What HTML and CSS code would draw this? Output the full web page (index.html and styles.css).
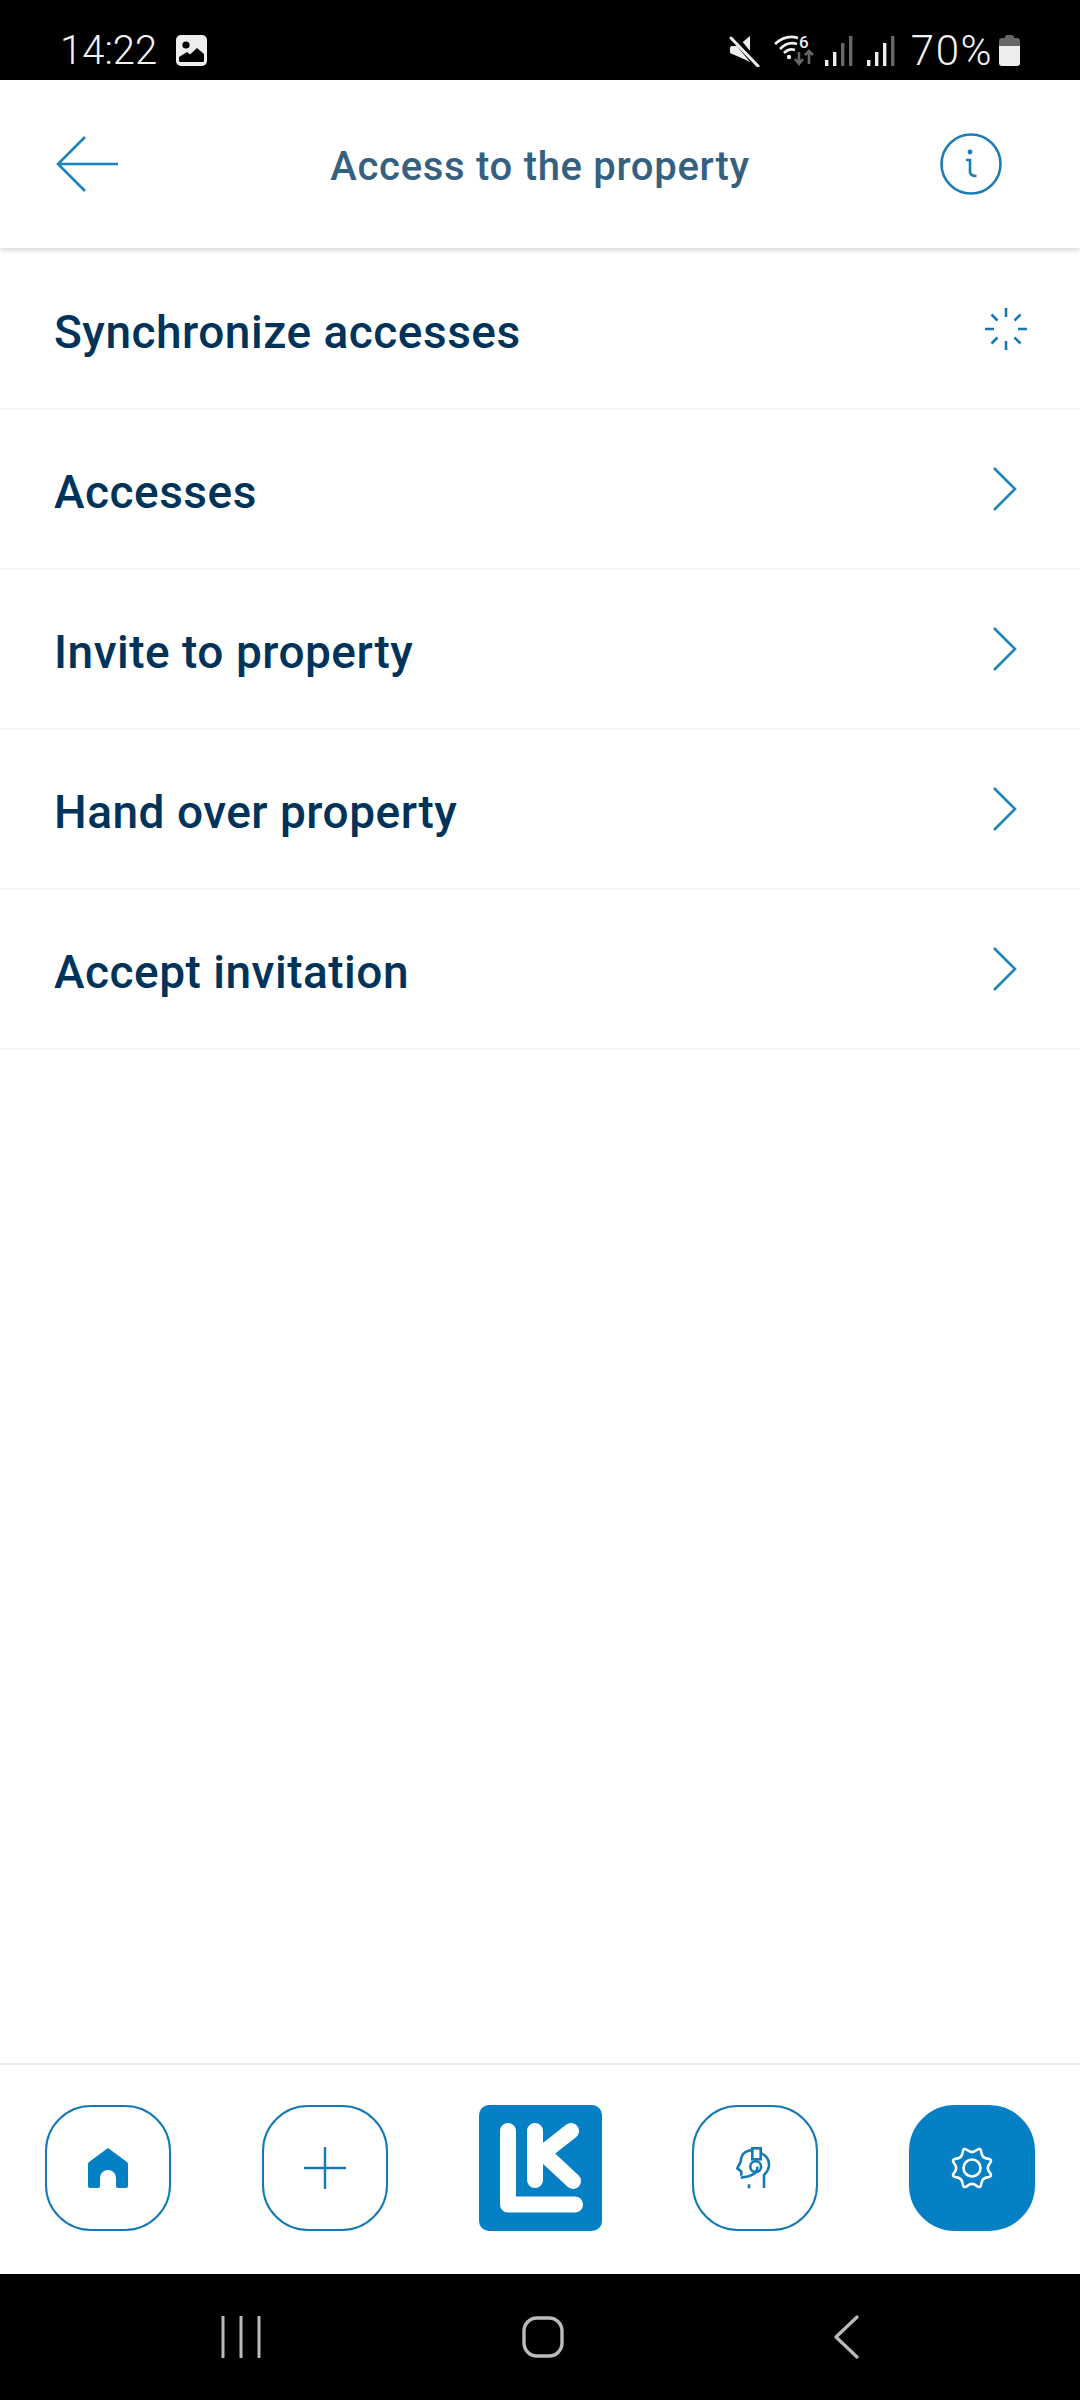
FILE: index.html
```html
<!DOCTYPE html>
<html lang="en">
<head>
  <meta charset="UTF-8">
  <meta name="viewport" content="width=device-width, initial-scale=1.0">
  <title>Access to the property</title>
  <link rel="stylesheet" href="styles.css">
</head>
<body>

  <div class="status-bar">
    <div class="status-left">
      <span class="clock">14:22</span>
      <svg class="icon-picture" viewBox="0 0 31 31">
        <rect width="31" height="31" rx="5" fill="#eee"/>
        <circle cx="10" cy="10" r="3.6" fill="#000"/>
        <path d="M3 26 V22 L11 17 L14 19.5 L21 13 L28 19 V26 Q28 27 26 27 H5 Q3 27 3 26Z" fill="#000"/>
      </svg>
    </div>
    <div class="status-right">
      <svg class="icon-mute" viewBox="0 0 32 32">
        <path d="M1 13 Q1 11 3 11 H9 L21 1 V27 L17 25 L1 18Z" fill="#eee"/>
        <path d="M4 1 L29 31" stroke="#000" stroke-width="7"/>
        <path d="M2 3 L29 31" stroke="#eee" stroke-width="3" stroke-linecap="round"/>
      </svg>
      <svg class="icon-wifi" viewBox="0 -8 42 40">
        <path d="M1 9 Q12 -1 24 3" fill="none" stroke="#eee" stroke-width="2.6"/>
        <path d="M6 14 Q14 6 23 9" fill="none" stroke="#eee" stroke-width="2.6"/>
        <path d="M10 18 Q15 13 21 15" fill="none" stroke="#eee" stroke-width="2.6"/>
        <circle cx="15" cy="22" r="2.2" fill="#eee"/>
        <text x="25" y="13" class="wifi-six">6</text>
        <path d="M25 29 V17 M21 24 L25 29 L29 24" fill="none" stroke="#666" stroke-width="2.6"/>
        <path d="M35 29 V16 M31 20 L35 16 L39 20" fill="none" stroke="#666" stroke-width="2.6"/>
      </svg>
      <svg class="icon-signal" viewBox="0 0 30 32">
        <rect x="1" y="25" width="3.4" height="6" fill="#eee"/>
        <rect x="9" y="17" width="3.4" height="14" fill="#eee"/>
        <rect x="17" y="8" width="3.4" height="23" fill="#666"/>
        <rect x="25" y="1" width="3.4" height="30" fill="#666"/>
      </svg>
      <svg class="icon-signal" viewBox="0 0 30 32">
        <rect x="1" y="25" width="3.4" height="6" fill="#eee"/>
        <rect x="9" y="17" width="3.4" height="14" fill="#eee"/>
        <rect x="17" y="8" width="3.4" height="23" fill="#eee"/>
        <rect x="25" y="1" width="3.4" height="30" fill="#666"/>
      </svg>
      <span class="battery-text">70%</span>
      <svg class="icon-battery" viewBox="0 0 21 31">
        <path d="M6 3 Q6 0 8 0 H13 Q15 0 15 3 H18 Q21 3 21 6 V11 H0 V6 Q0 3 3 3Z" fill="#666"/>
        <path d="M0 11 H21 V28 Q21 31 18 31 H3 Q0 31 0 28Z" fill="#eee"/>
      </svg>
    </div>
  </div>

  <header class="top-bar">
    <svg class="icon-back" viewBox="0 0 64 58">
      <path d="M30 2 L3 29 L30 56 M3 29 H63" fill="none" stroke="#1a84bd" stroke-width="2.6"/>
    </svg>
    <h1>Access to the property</h1>
    <svg class="icon-info" viewBox="0 0 62 62">
      <circle cx="31" cy="31" r="29.5" fill="none" stroke="#1a7db5" stroke-width="2.6"/>
      <circle cx="30" cy="19" r="2.4" fill="#1a7db5"/>
      <path d="M26 27 H30 V39 Q30 43 36.5 43" fill="none" stroke="#1a7db5" stroke-width="2.6"/>
    </svg>
  </header>

  <main class="menu">
    <div class="menu-row">
      <span>Synchronize accesses</span>
      <svg class="icon-spinner" viewBox="-22 -22 44 44">
        <path d="M0 -21 V-12 M0 21 V12 M-21 0 H-12 M21 0 H12 M-14.5 -14.5 L-8.5 -8.5 M14.5 -14.5 L8.5 -8.5 M-14.5 14.5 L-8.5 8.5 M14.5 14.5 L8.5 8.5" stroke="#137ab5" stroke-width="2.6"/>
      </svg>
    </div>
    <div class="menu-row">
      <span>Accesses</span>
      <svg class="icon-chevron" viewBox="0 0 26 44"><path d="M2 1 L23 22 L2 43" fill="none" stroke="#1a84bd" stroke-width="2.6"/></svg>
    </div>
    <div class="menu-row">
      <span>Invite to property</span>
      <svg class="icon-chevron" viewBox="0 0 26 44"><path d="M2 1 L23 22 L2 43" fill="none" stroke="#1a84bd" stroke-width="2.6"/></svg>
    </div>
    <div class="menu-row">
      <span>Hand over property</span>
      <svg class="icon-chevron" viewBox="0 0 26 44"><path d="M2 1 L23 22 L2 43" fill="none" stroke="#1a84bd" stroke-width="2.6"/></svg>
    </div>
    <div class="menu-row">
      <span>Accept invitation</span>
      <svg class="icon-chevron" viewBox="0 0 26 44"><path d="M2 1 L23 22 L2 43" fill="none" stroke="#1a84bd" stroke-width="2.6"/></svg>
    </div>
  </main>

  <nav class="tab-bar">
    <div class="tab-btn">
      <svg class="icon-home" viewBox="0 0 40 40">
        <path d="M20 0 L39 14 Q40 15 40 16 V38 Q40 40 38 40 H30 Q28 40 28 38 V30 A8 8 0 0 0 12 30 V38 Q12 40 10 40 H2 Q0 40 0 38 V16 Q0 15 1 14Z" fill="#0580c4"/>
      </svg>
    </div>
    <div class="tab-btn">
      <svg class="icon-plus" viewBox="0 0 42 42">
        <path d="M21 0 V42 M0 21 H42" stroke="#137ab5" stroke-width="2.4"/>
      </svg>
    </div>
    <svg class="logo" viewBox="0 0 123 126">
      <rect width="123" height="126" rx="10" fill="#0580c4"/>
      <path d="M29 26 V99.5 H96 M56 26 V75 M92 26 L64 48 L94 76" fill="none" stroke="#fff" stroke-width="16" stroke-linecap="round" stroke-linejoin="round"/>
    </svg>
    <div class="tab-btn">
      <svg class="icon-support" viewBox="0 0 38 42">
        <g fill="none" stroke="#137ab5" stroke-width="2.6">
          <path d="M16.3 3 Q8 4 6 9 Q4.7 12 4.7 14.7 L1.3 21.3 L5.3 24.7 V28.7"/>
          <path d="M24.7 6.3 Q33 9 33 18 Q33 23 28 28 V41"/>
          <rect x="16.3" y="1.3" width="8.4" height="11"/>
          <circle cx="19.7" cy="19.7" r="5.4"/>
          <path d="M21.3 19.7 Q22 29 4.7 30.7"/>
          <path d="M13 37.3 V41.3"/>
        </g>
      </svg>
    </div>
    <div class="tab-btn tab-btn-active">
      <svg class="icon-gear" viewBox="-24 -24 48 48">
        <path d="M17.63 4.4 Q21.25 8.8 15.57 9.35 Q9.9 9.9 9.35 15.57 Q8.8 21.25 4.4 17.63 Q0 14 -4.4 17.63 Q-8.8 21.25 -9.35 15.57 Q-9.9 9.9 -15.57 9.35 Q-21.25 8.8 -17.63 4.4 Q-14 0 -17.63 -4.4 Q-21.25 -8.8 -15.57 -9.35 Q-9.9 -9.9 -9.35 -15.57 Q-8.8 -21.25 -4.4 -17.63 Q0 -14 4.4 -17.63 Q8.8 -21.25 9.35 -15.57 Q9.9 -9.9 15.57 -9.35 Q21.25 -8.8 17.63 -4.4 Q14 0 17.63 4.4Z" fill="none" stroke="#fff" stroke-width="2.6"/>
        <circle r="8.5" fill="none" stroke="#fff" stroke-width="2.6"/>
      </svg>
    </div>
  </nav>

  <div class="system-nav">
    <svg class="icon-recent" viewBox="0 0 42 42">
      <path d="M3 1 V41 M21 1 V41 M39 1 V41" stroke="#bbb" stroke-width="3" stroke-linecap="round"/>
    </svg>
    <svg class="icon-homebtn" viewBox="0 0 42 42">
      <rect x="2" y="2" width="38" height="38" rx="13" fill="none" stroke="#bbb" stroke-width="3.4"/>
    </svg>
    <svg class="icon-sysback" viewBox="0 0 26 44">
      <path d="M24 2 L3 22 L24 42" fill="none" stroke="#bbb" stroke-width="3.2" stroke-linecap="round" stroke-linejoin="round"/>
    </svg>
  </div>

</body>
</html>
```

FILE: styles.css
```css
* {
  box-sizing: border-box;
}
html, body {
  margin: 0;
  height: 2400px;
}
body {
  display: flex;
  flex-direction: column;
  font-family: Roboto, "Liberation Sans", sans-serif;
  background: #fff;
  overflow: hidden;
}
svg {
  display: block;
  flex: none;
}

/* status bar */
.status-bar {
  height: 80px;
  background: #000;
  color: #f2f2f2;
  display: flex;
  justify-content: space-between;
  align-items: center;
  padding: 21px 60px 0 60px;
}
.status-left, .status-right {
  display: flex;
  align-items: center;
}
.clock {
  font-size: 40px;
  font-weight: 300;
  margin-right: 19px;
}
.icon-picture {
  width: 31px;
  height: 31px;
}
.icon-mute {
  width: 32px;
  height: 32px;
  margin-right: 13px;
}
.icon-wifi {
  width: 42px;
  height: 40px;
  margin: -8px 8px 0 0;
}
.wifi-six {
  font-size: 17px;
  font-weight: 500;
  fill: #eee;
}
.icon-signal {
  width: 30px;
  height: 32px;
  margin-right: 12px;
}
.battery-text {
  font-size: 42px;
  font-weight: 300;
  letter-spacing: 1.5px;
  margin: 0 6px 0 3px;
}
.icon-battery {
  width: 21px;
  height: 31px;
}

/* top bar */
.top-bar {
  height: 168px;
  background: #fff;
  display: grid;
  grid-template-columns: 1fr auto 1fr;
  align-items: center;
  box-shadow: 0 2px 6px rgba(0,0,0,0.18);
  position: relative;
}
.top-bar h1 {
  margin: 0;
  padding-top: 4px;
  font-size: 40px;
  font-weight: 500;
  letter-spacing: 0.7px;
  color: #36607f;
}
.icon-back {
  width: 64px;
  height: 58px;
  margin-left: 55px;
  justify-self: start;
}
.icon-info {
  width: 62px;
  height: 62px;
  margin-right: 78px;
  justify-self: end;
}

/* menu */
.menu {
  flex: 1;
  padding-top: 2px;
}
.menu-row {
  height: 160px;
  display: flex;
  align-items: center;
  justify-content: space-between;
  padding: 0 62px 0 54px;
  border-bottom: 2px solid #f5f5f5;
  font-size: 46px;
  font-weight: 500;
  letter-spacing: 0.5px;
  color: #00335a;
}
.menu-row span {
  padding-top: 6px;
}
.icon-spinner {
  width: 44px;
  height: 44px;
  margin-right: -10px;
}
.icon-chevron {
  width: 26px;
  height: 44px;
}

/* bottom tabs */
.tab-bar {
  height: 211px;
  display: flex;
  align-items: center;
  justify-content: space-between;
  padding: 0 45px 3px;
  border-top: 2px solid #ececec;
}
.tab-btn {
  width: 126px;
  height: 126px;
  border: 2.5px solid #137ab5;
  border-radius: 46px;
  display: flex;
  align-items: center;
  justify-content: center;
}
.tab-btn-active {
  background: #0580c4;
  border-color: #0580c4;
}
.icon-home {
  width: 40px;
  height: 40px;
}
.icon-plus {
  width: 42px;
  height: 42px;
}
.logo {
  width: 123px;
  height: 126px;
}
.icon-support {
  width: 38px;
  height: 42px;
}
.icon-gear {
  width: 48px;
  height: 48px;
}

/* android nav */
.system-nav {
  height: 126px;
  background: #000;
  display: flex;
  align-items: center;
  gap: 260px;
  padding-left: 220px;
}
.icon-recent {
  width: 42px;
  height: 42px;
}
.icon-homebtn {
  width: 42px;
  height: 42px;
}
.icon-sysback {
  width: 26px;
  height: 44px;
  margin-left: 9px;
}
```
